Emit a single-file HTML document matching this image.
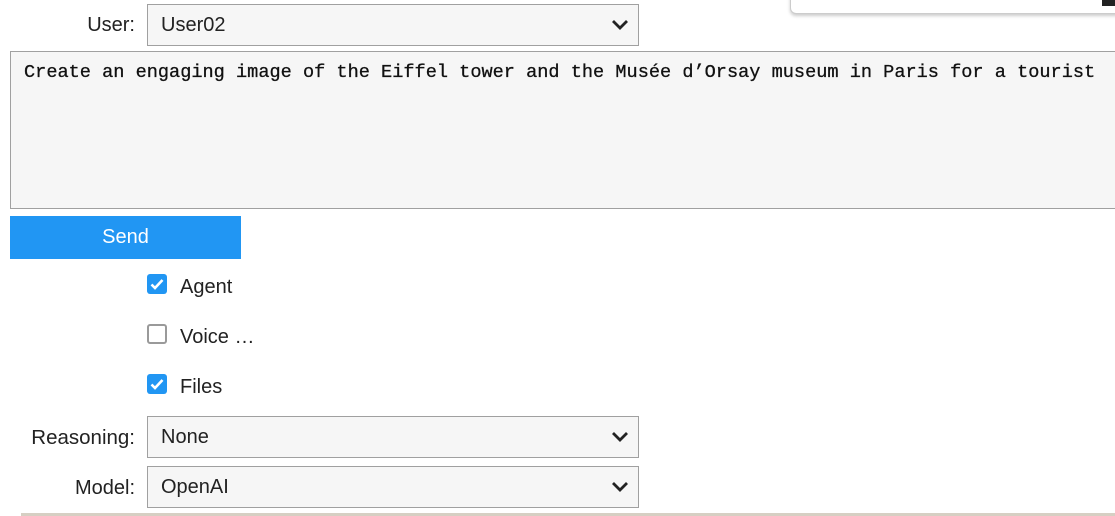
<!DOCTYPE html>
<html><head><meta charset="utf-8"><style>
body{margin:0;width:1115px;height:516px;background:#fff;position:relative;overflow:hidden;font-family:"Liberation Sans",sans-serif;color:#222;}
.abs{position:absolute}
.lbl{font-size:20px;text-align:right;width:135px;left:0}
.sel{left:147px;width:492px;height:42px;border:1px solid #a0a0a0;background:#f6f6f6;box-sizing:border-box;font-size:20px;line-height:40px;padding-left:13px}
.sel svg{position:absolute;right:9px;top:14px}
.cb{left:147px;width:20px;height:20px;border-radius:3px;box-sizing:border-box}
.on{background:#2196f3}
.off{border:2px solid #9a9a9a;background:#fff}
.cl{left:180px;font-size:20px}
</style></head><body>
<div class="abs" style="left:790px;top:-10px;width:340px;height:22px;border:1px solid #ccc;border-radius:6px;box-shadow:0 2px 3px #ccc;background:#fff"></div>
<div class="abs" style="left:1102px;top:0;width:13px;height:6px;background:#222"></div>
<div class="abs lbl" style="top:14px">User:</div>
<div class="abs sel" style="top:4px">User02<svg width="18" height="12" viewBox="0 0 18 12"><path d="M2 2l7 7 7-7" stroke="#222" stroke-width="2.8" fill="none"/></svg></div>
<div class="abs" style="left:10px;top:51px;width:1120px;height:158px;border:1px solid #a0a0a0;background:#f6f6f6;box-sizing:border-box"></div>
<div class="abs" style="left:24px;top:62px;font-family:'Liberation Mono',monospace;font-size:18.6px;color:#111;white-space:pre;-webkit-text-stroke:0.3px #111">Create an engaging image of the Eiffel tower and the Musée d’Orsay museum in Paris for a tourist</div>
<div class="abs" style="left:10px;top:216px;width:231px;height:43px;background:#2196f3;color:#fff;font-size:20px;line-height:43px;text-align:center">Send</div>
<div class="abs cb on" style="top:274px"><svg width="20" height="20" viewBox="0 0 20 20"><path d="M4.5 10.5l3.5 3.5 7.5-8" stroke="#fff" stroke-width="2.6" fill="none"/></svg></div>
<div class="abs cl" style="top:276px">Agent</div>
<div class="abs cb off" style="top:324px"></div>
<div class="abs cl" style="top:326px">Voice …</div>
<div class="abs cb on" style="top:374px"><svg width="20" height="20" viewBox="0 0 20 20"><path d="M4.5 10.5l3.5 3.5 7.5-8" stroke="#fff" stroke-width="2.6" fill="none"/></svg></div>
<div class="abs cl" style="top:376px">Files</div>
<div class="abs lbl" style="top:426px;font-size:20.5px">Reasoning:</div>
<div class="abs sel" style="top:416px">None<svg width="18" height="12" viewBox="0 0 18 12"><path d="M2 2l7 7 7-7" stroke="#222" stroke-width="2.8" fill="none"/></svg></div>
<div class="abs lbl" style="top:477px">Model:</div>
<div class="abs sel" style="top:466px">OpenAI<svg width="18" height="12" viewBox="0 0 18 12"><path d="M2 2l7 7 7-7" stroke="#222" stroke-width="2.8" fill="none"/></svg></div>
<div class="abs" style="left:21px;top:513px;width:1100px;height:3px;background:#d6cfc3"></div>
</body></html>
